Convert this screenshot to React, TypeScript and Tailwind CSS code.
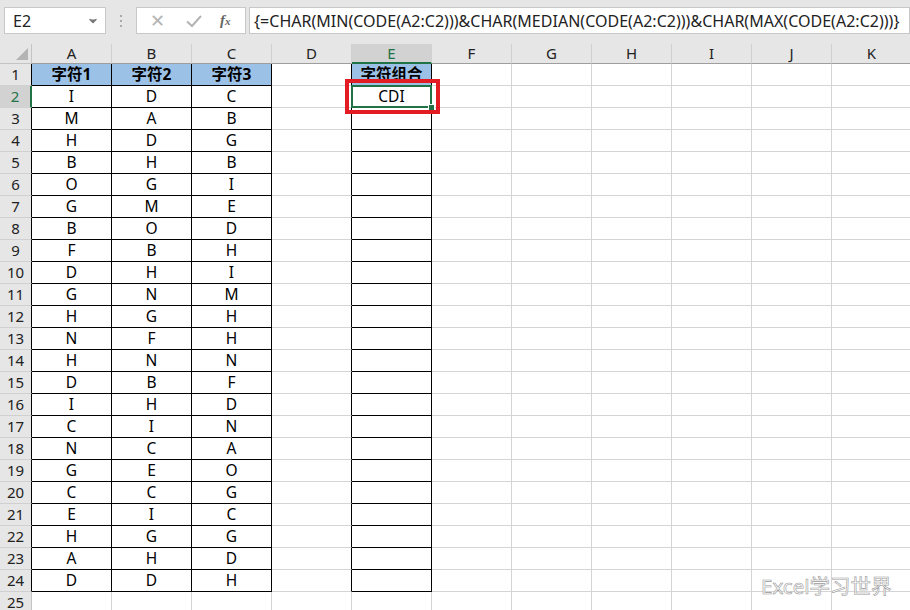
import { ChevronDown } from 'lucide-react';

const COLS = ['A', 'B', 'C', 'D', 'E', 'F', 'G', 'H', 'I', 'J', 'K'];

// rows 2..24, columns A-C
const DATA = [
  'IDC', 'MAB', 'HDG', 'BHB', 'OGI', 'GME', 'BOD', 'FBH', 'DHI', 'GNM', 'HGH', 'NFH',
  'HNN', 'DBF', 'IHD', 'CIN', 'NCA', 'GEO', 'CCG', 'EIC', 'HGG', 'AHD', 'DDH',
];

const FORMULA = '{=CHAR(MIN(CODE(A2:C2)))&CHAR(MEDIAN(CODE(A2:C2)))&CHAR(MAX(CODE(A2:C2)))}';
const FONT = "font-['Noto_Sans','Noto_Sans_CJK_SC',sans-serif]";

function cellText(r: number, c: number) {
  if (r === 1) {
    if (c < 3) return `字符${c + 1}`;
    if (c === 4) return '字符组合';
    return '';
  }
  if (c < 3 && r <= 24) return DATA[r - 2][c];
  if (c === 4 && r === 2) return 'CDI';
  return '';
}

function Cell({ r, c }: { r: number; c: number }) {
  const inTable = (c < 3 || c === 4) && r <= 24;
  const header = r === 1 && inTable;
  // D's right edge is E's left border
  const rightBlack = r <= 24 && c <= 4;
  const selected = r === 2 && c === 4;
  return (
    <div
      className={`relative flex h-[22px] items-center justify-center border-b border-r text-[15.5px] text-black ${
        rightBlack ? 'border-r-black' : 'border-r-[#d4d4d4]'
      } ${inTable ? 'border-b-black' : 'border-b-[#d4d4d4]'} ${header ? 'bg-[#9bc2e6] font-bold' : 'bg-white'} ${
        selected ? 'z-10' : ''
      }`}
    >
      {selected && (
        <>
          <div className="absolute inset-[-1px] border-2 border-[#217346]" />
          <div className="absolute bottom-[-4px] right-[-4px] h-[7px] w-[7px] border border-white bg-[#217346]" />
        </>
      )}
      <span className="relative leading-none">{cellText(r, c)}</span>
    </div>
  );
}

export default function App() {
  const rows = Array.from({ length: 25 }, (_, i) => i + 1);
  return (
    <div className={`relative h-[610px] w-[910px] overflow-hidden bg-white ${FONT}`}>
      {/* formula bar */}
      <div className="flex h-[44px] items-start bg-[#e6e6e6] pt-[7px]">
        <div className="ml-[4px] flex h-[27px] w-[102px] items-center justify-between border border-[#c8c8c8] bg-white pl-[8px] pr-[6px] text-[16px] text-[#222]">
          <span>E2</span>
          <ChevronDown className="h-3 w-3 fill-[#777] text-[#777]" strokeWidth={3} />
        </div>
        <div className="flex h-[27px] w-[30px] flex-col items-center justify-center gap-[3px]">
          <span className="h-[2px] w-[2px] bg-[#aaa]" />
          <span className="h-[2px] w-[2px] bg-[#aaa]" />
          <span className="h-[2px] w-[2px] bg-[#aaa]" />
        </div>
        <div className="flex h-[27px] w-[110px] items-center border border-[#c8c8c8] bg-white">
          <span className="ml-[10px] w-[20px] text-center text-[18px] text-[#b4b4b4]">✕</span>
          <svg className="ml-[18px]" width="18" height="14" viewBox="0 0 18 14">
            <path d="M2 7.5 L7 12 L16 2" fill="none" stroke="#b4b4b4" strokeWidth="2" />
          </svg>
          <span className="ml-[17px] font-['Liberation_Serif',serif] text-[15px] font-bold italic text-[#666]">
            f<span className="text-[11px]">x</span>
          </span>
        </div>
        <div className="ml-[3px] flex h-[27px] flex-1 items-center border border-[#c8c8c8] bg-white pl-[4px] text-[16px] tracking-[0.02px] text-[#222]">
          {FORMULA}
        </div>
      </div>

      {/* sheet */}
      <div className="grid grid-cols-[32px_repeat(11,80px)]">
        {/* corner */}
        <div className="relative h-[20px] border-b border-r border-[#c4c4c4] bg-[#e6e6e6]">
          <div className="absolute bottom-[3px] right-[3px] h-0 w-0 border-b-[12px] border-l-[12px] border-b-[#b4b4b4] border-l-transparent" />
        </div>
        {COLS.map((c, i) => (
          <div
            key={c}
            className={`flex h-[20px] items-center justify-center border-r border-[#d0d0d0] text-[15px] ${
              i === 4
                ? 'border-b-2 border-b-[#217346] bg-[#d2d2d2] text-[#217346]'
                : 'border-b border-b-[#9e9e9e] bg-[#e6e6e6] text-[#222]'
            }`}
          >
            {c}
          </div>
        ))}
        {rows.map((r) => (
          <div key={r} className="contents">
            <div
              className={`flex h-[22px] items-center justify-center border-b border-[#d0d0d0] text-[15px] ${
                r === 2
                  ? 'border-r-2 border-r-[#217346] bg-[#d2d2d2] text-[#217346]'
                  : r <= 24
                    ? 'border-r border-r-black bg-[#e6e6e6] text-[#222]'
                    : 'border-r border-r-[#c4c4c4] bg-[#e6e6e6] text-[#222]'
              }`}
            >
              {r}
            </div>
            {COLS.map((_, c) => (
              <Cell key={c} r={r} c={c} />
            ))}
          </div>
        ))}
      </div>

      {/* highlight box */}
      <div className="absolute left-[345px] top-[79px] z-20 h-[35px] w-[95px] border-4 border-[#e31b23]" />

      {/* watermark */}
      <div className="absolute left-[761px] top-[571px] text-[20.5px] text-white [-webkit-text-stroke:0.6px_#9a9a9a]">
        Excel学习世界
      </div>
    </div>
  );
}
